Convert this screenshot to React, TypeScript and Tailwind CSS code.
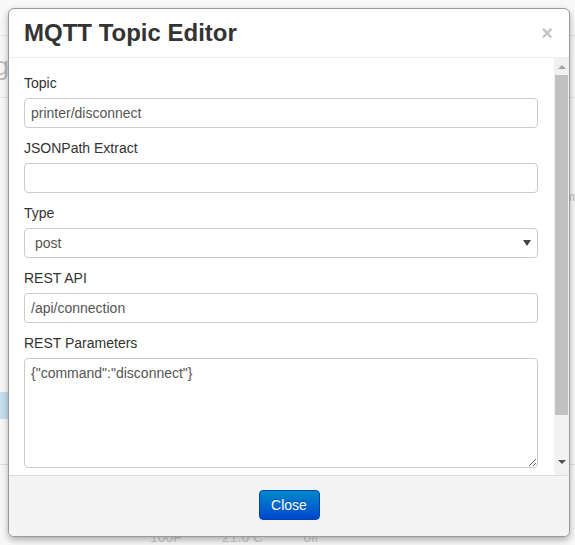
import React from 'react';

function Field({ label, children }: { label: string; children: React.ReactNode }) {
  return (
    <div className="flex flex-col">
      <label className="mb-[5px] text-[14px] leading-[20px] text-[#333]">{label}</label>
      {children}
    </div>
  );
}

const inputCls =
  'h-[30px] w-full rounded-[4px] border border-[#ccc] bg-white px-[6px] text-[14px] text-[#555] outline-none';

function Scrollbar() {
  return (
    <div className="flex w-[15px] flex-col items-center bg-[#f1f1f1]">
      <div className="flex h-[17px] w-full items-center justify-center">
        <div className="h-0 w-0 border-x-[4px] border-b-[4px] border-x-transparent border-b-[#a3a3a3]" />
      </div>
      <div className="h-[340px] w-[13px] bg-[#c1c1c1]" />
      <div className="flex-1" />
      <div className="flex h-[17px] w-full items-center justify-center">
        <div className="h-0 w-0 border-x-[4px] border-t-[4px] border-x-transparent border-t-[#505050]" />
      </div>
      <div className="h-[5px]" />
    </div>
  );
}

export default function App() {
  return (
    <div className="relative h-[545px] w-[575px] overflow-hidden bg-[#f8f8f8] font-['Liberation_Sans',Arial,sans-serif]">
      {/* page behind the dialog */}
      <div className="flex flex-col">
        <div className="h-[36px] border-b border-[#e6e6e6]" />
        <div className="flex h-[62px] items-center border-b border-[#e6e6e6]">
          <div className="flex w-[9px] justify-end overflow-hidden">
            <span className="text-[26px] text-[#bbb]">Setting</span>
          </div>
        </div>
        <div className="flex h-[110px] items-end justify-end">
          <span className="pb-[2px] text-[12px] text-[#bbb]">Param</span>
        </div>
        <div className="h-[184px]" />
        <div className="h-[27px] w-[40px] bg-[#c5dff0]" />
        <div className="h-[46px] border-b border-[#e0e0e0]" />
        <div className="flex h-[80px] items-end gap-[40px] pl-[150px] text-[14px] leading-[16px] text-[#ccc]">
          <span>100F</span>
          <span>21.0 C</span>
          <span>off</span>
        </div>
      </div>

      {/* modal */}
      <div className="absolute left-[8px] top-[8px] flex h-[529px] w-[562px] flex-col overflow-hidden rounded-[6px] border border-[#9a9a9a] bg-white shadow-[0_3px_7px_rgba(0,0,0,0.3)]">
        <div className="flex h-[49px] shrink-0 items-center justify-between border-b border-[#eee] pl-[15px] pr-[16px]">
          <h3 className="text-[24px] font-bold leading-[30px] text-[#333]">MQTT Topic Editor</h3>
          <span className="text-[20px] font-bold leading-[20px] text-[#c4c4c4]">×</span>
        </div>

        <div className="flex min-h-0 flex-1">
          <div className="flex flex-1 flex-col gap-[10px] pl-[15px] pr-[16px] pt-[15px]">
            <Field label="Topic">
              <input className={inputCls} defaultValue="printer/disconnect" />
            </Field>
            <Field label="JSONPath Extract">
              <input className={inputCls} defaultValue="" />
            </Field>
            <Field label="Type">
              <div className="relative">
                <div className={inputCls + ' flex items-center pl-[10px]'}>post</div>
                <div className="absolute right-[7px] top-[12px] h-0 w-0 border-x-[4px] border-t-[6px] border-x-transparent border-t-[#444]" />
              </div>
            </Field>
            <Field label="REST API">
              <input className={inputCls} defaultValue="/api/connection" />
            </Field>
            <Field label="REST Parameters">
              <textarea
                className="h-[110px] w-full rounded-[4px] border border-[#ccc] bg-white px-[6px] py-[4px] text-[14px] leading-[20px] text-[#555] outline-none"
                defaultValue={'{"command":"disconnect"}'}
              />
            </Field>
          </div>
          <Scrollbar />
        </div>

        <div className="flex h-[61px] shrink-0 items-start justify-center border-t border-[#ddd] bg-[#f4f4f4] pt-[14px]">
          <button className="h-[30px] w-[61px] rounded-[4px] border border-[#0044aa] bg-gradient-to-b from-[#0088cc] to-[#0044cc] text-[14px] text-white [text-shadow:0_-1px_0_rgba(0,0,0,0.25)]">
            Close
          </button>
        </div>
      </div>
    </div>
  );
}
